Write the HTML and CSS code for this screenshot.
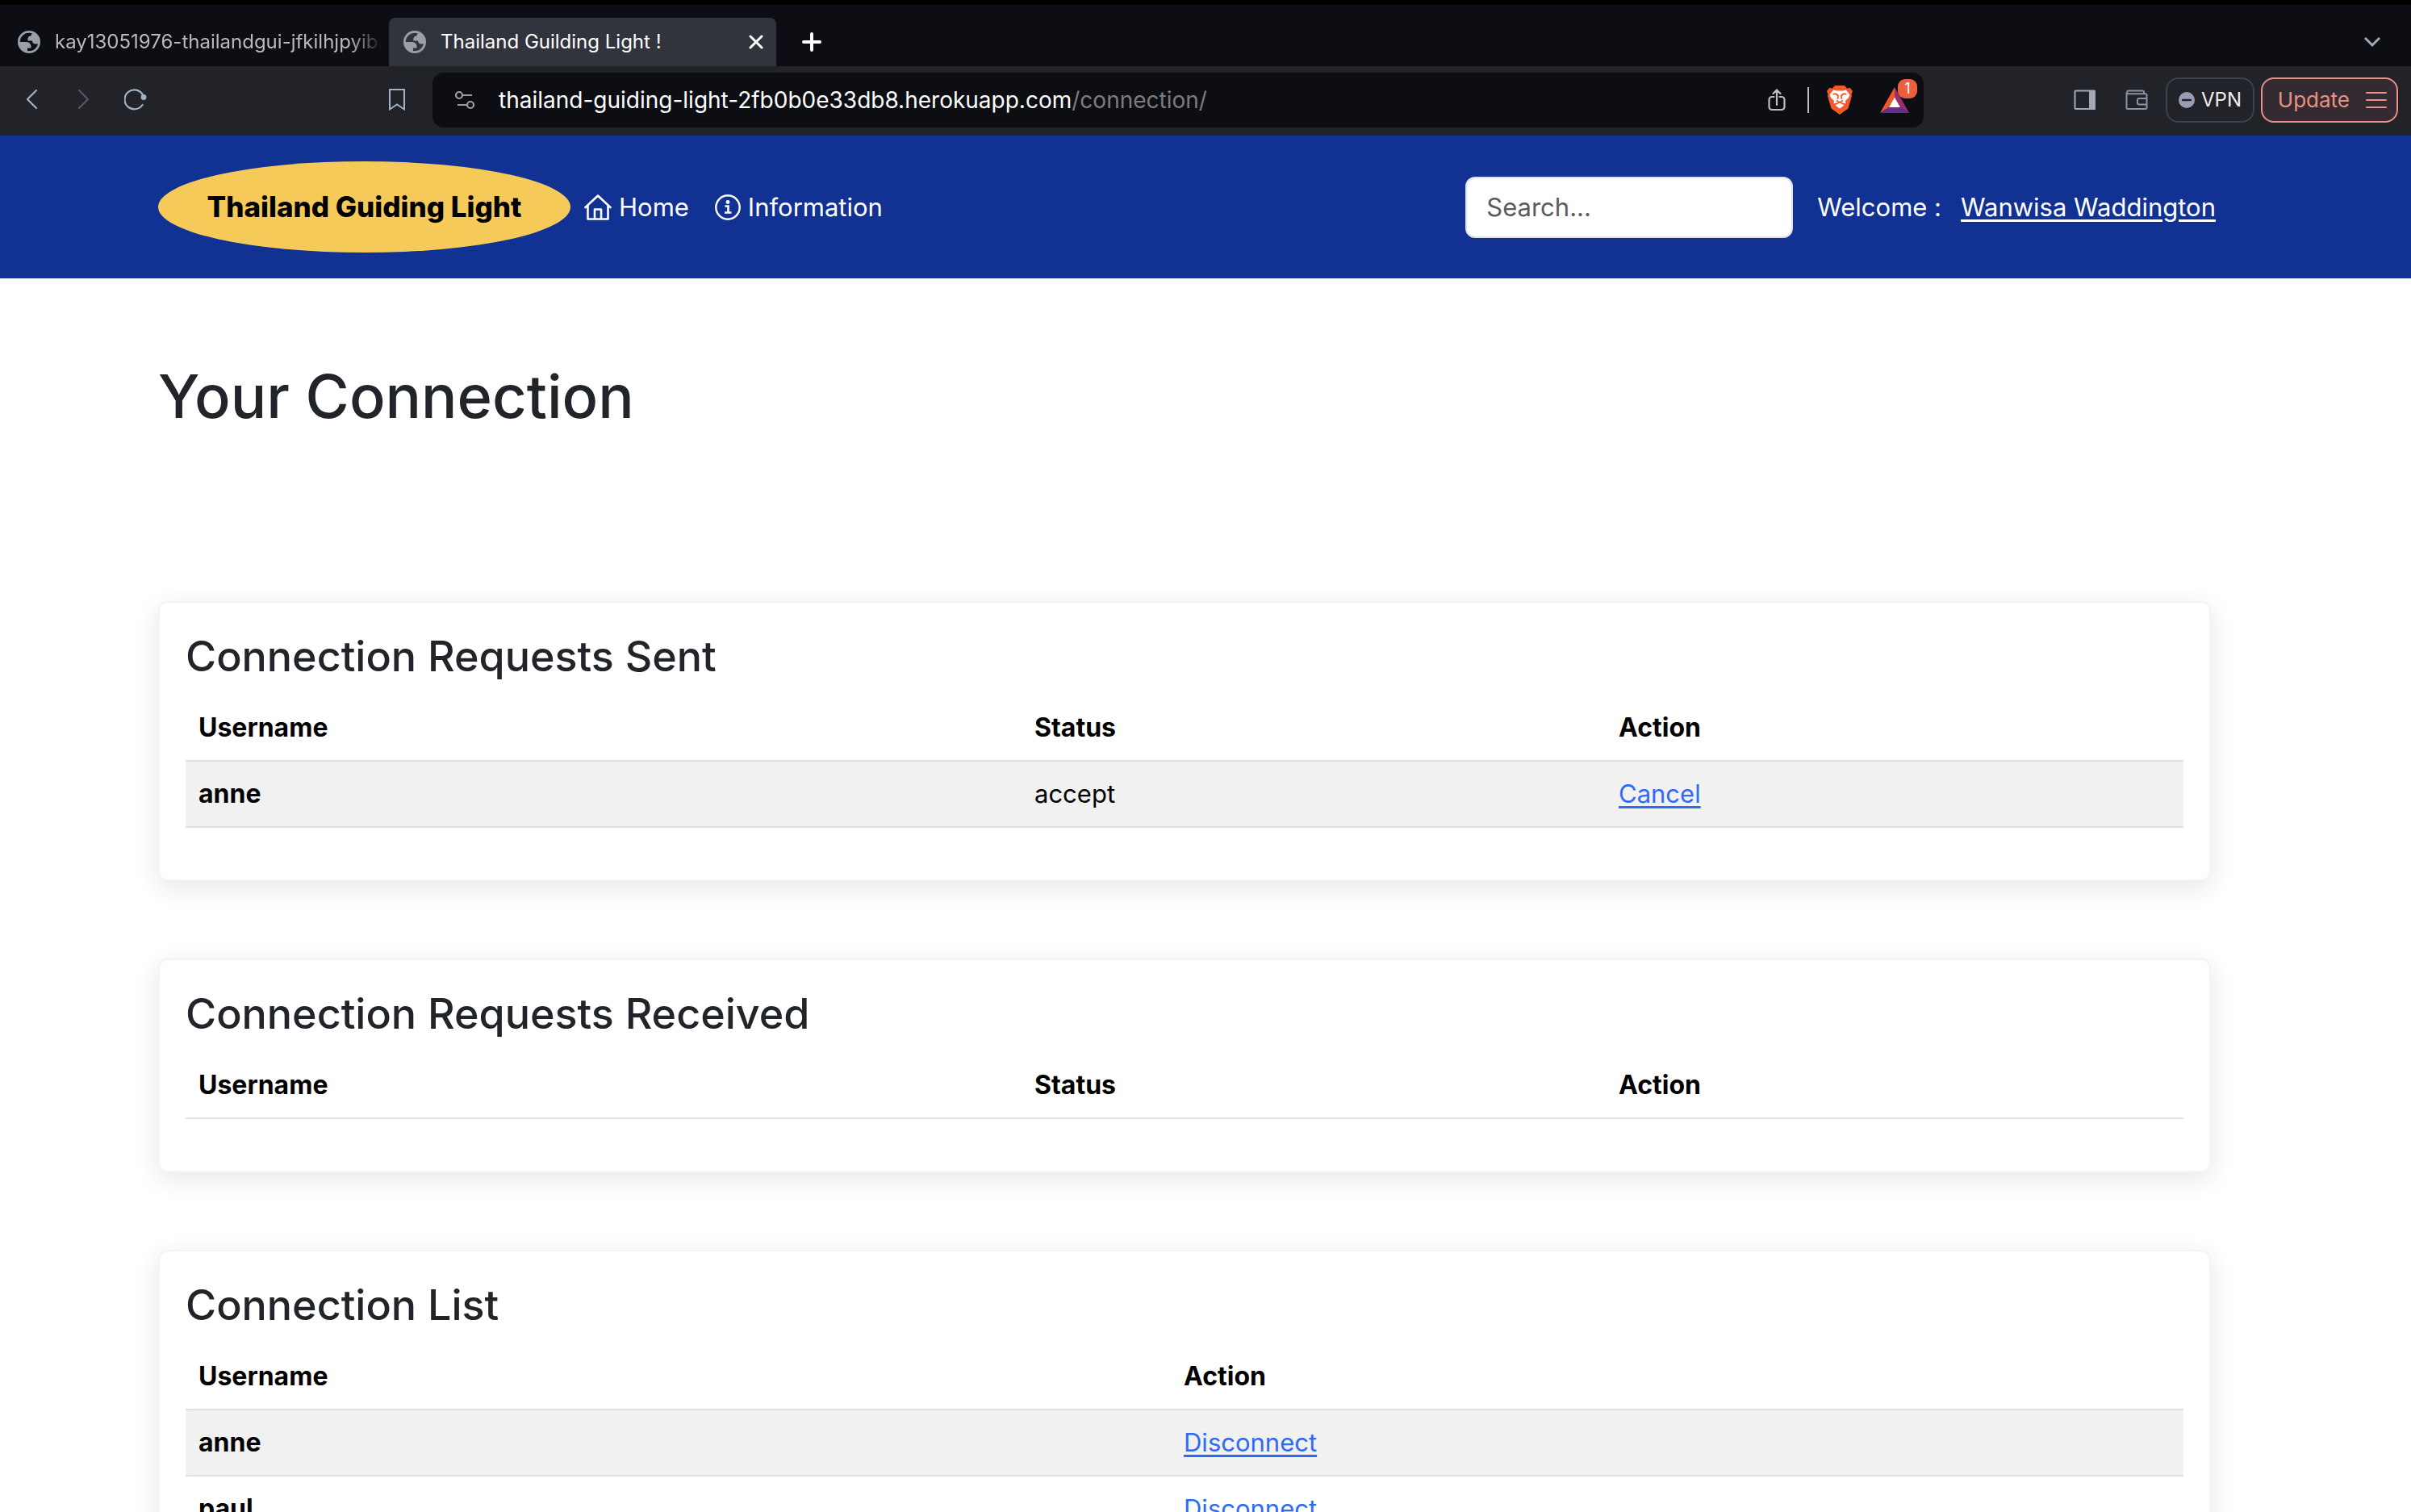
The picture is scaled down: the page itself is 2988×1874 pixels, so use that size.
FILE: index.html
```html
<!DOCTYPE html>
<html lang="en">
<head>
<meta charset="utf-8">
<title>Thailand Guilding Light !</title>
<link rel="stylesheet" href="styles.css">
</head>
<body>
<svg class="defs" aria-hidden="true">
  <symbol id="globe" viewBox="0 0 28 28"><circle cx="14" cy="14" r="12.600" fill="none" stroke="currentColor" stroke-width="2.800"/><path fill="currentColor" d="M1.500 14h8.500c4.500 0 7 2.500 6.500 7.500h-4.500V26C5 25.500 1 20 1.500 14zM16 2l5 1.500 5.500 7 .5 4.500c-1 1-2.500 1.500-4.500 1.500-3 0-4.500-1.500-4.500-4h-5.500c-.5-4 1-6 4-6 0-1.500.5-2.500 1.500-3z"/></symbol>
</svg>

<div class="tabstrip">
  <div class="tab">
    <svg class="favicon" aria-hidden="true"><use href="#globe"/></svg>
    <span class="tab-title tab-title-fade">kay13051976-thailandgui-jfkilhjpyib.</span>
  </div>
  <div class="tab tab-active">
    <svg class="favicon" aria-hidden="true"><use href="#globe"/></svg>
    <span class="tab-title">Thailand Guilding Light !</span>
    <button class="icon-btn" aria-label="Close tab"><svg width="18" height="18" viewBox="0 0 18 18" fill="none" stroke="#fff" stroke-width="3" stroke-linecap="round"><path d="M2 2l14 14M16 2L2 16"/></svg></button>
  </div>
  <button class="icon-btn new-tab" aria-label="New tab"><svg width="26" height="26" viewBox="0 0 26 26" fill="none" stroke="#fff" stroke-width="4" stroke-linecap="round"><path d="M13 3v20M3 13h20"/></svg></button>
  <button class="icon-btn tab-menu" aria-label="Search tabs"><svg width="20" height="14" viewBox="0 0 20 14" fill="none" stroke="#a1a9b8" stroke-width="3"><path d="M1 2l9 9 9-9"/></svg></button>
</div>

<div class="toolbar">
  <div class="toolbar-nav">
    <button class="icon-btn" aria-label="Back"><svg width="28" height="28" viewBox="0 0 28 28" fill="none" stroke="#a1b2c5" stroke-width="2.200" stroke-linecap="round" stroke-linejoin="round"><path d="M19 2L8 13l11 11"/></svg></button>
    <button class="icon-btn" aria-label="Forward"><svg width="28" height="28" viewBox="0 0 28 28" fill="none" stroke="#555a64" stroke-width="2.200" stroke-linecap="round" stroke-linejoin="round"><path d="M8 2l11 11L8 24"/></svg></button>
    <button class="icon-btn" aria-label="Reload"><svg width="28" height="28" viewBox="0 0 28 28" fill="none" stroke="#a1b2c5" stroke-width="2.200" stroke-linecap="round"><path d="M22.500 20A12 12 0 1 1 23 7.500"/><circle cx="24" cy="10.500" r="3.400" fill="#a1b2c5" stroke="none"/></svg></button>
  </div>
  <button class="icon-btn bookmark" aria-label="Bookmark this page"><svg width="20" height="28" viewBox="0 0 20 28" fill="none" stroke="#a1b2c5" stroke-width="2"><path d="M1 1h18v24.500l-9-6-9 6z"/></svg></button>
  <div class="address">
    <svg width="24" height="24" viewBox="0 0 24 24" fill="none" stroke="#9b9fa4" stroke-width="2.200" aria-hidden="true"><circle cx="5" cy="6" r="4"/><path d="M9 6h12M3 18h11"/><circle cx="19" cy="18" r="4"/></svg>
    <span class="url">thailand-guiding-light-2fb0b0e33db8.herokuapp.com<span class="url-path">/connection/</span></span>
    <button class="icon-btn" aria-label="Share"><svg width="22" height="28" viewBox="0 0 22 28" fill="none" stroke="#bcbec0" stroke-width="2.200" stroke-linecap="round"><path d="M7.500 10H5a3.500 3.500 0 0 0-3.500 3.500v9A3.500 3.500 0 0 0 5 26h12a3.500 3.500 0 0 0 3.500-3.500v-9A3.500 3.500 0 0 0 17 10h-2.500M11 20V2M6.500 6L11 1.500 15.500 6"/></svg></button>
    <span class="divider"></span>
    <button class="icon-btn lion" aria-label="Brave Shields"><svg width="32" height="36" viewBox="0 0 32 36"><path fill="#f0592a" d="M10 0h12l3 3.500 4-.5 3 4-1.500 4 .5 2-4.500 15.500L16 36 5.500 28.500 1 13l.5-2L0 7l3-4 4 .5z"/><path fill="#fff" d="M8 5.500l4.500 1h7l4.500-1 4.500 6-1.500 3.500-4 4 .5 3.500L18 21l-2-1-2 1-5.500 1.500.5-3.500-4-4-1.500-3.500zM10.500 24.500L16 21.500l5.500 3L16 28.500z"/><path fill="none" stroke="#f0592a" stroke-width="1.800" d="M7.500 10.500l4 0 2.500 2-.5 4.500M24.500 10.500l-4 0-2.500 2 .5 4.500M12 18.500l4 2.500 4-2.500"/></svg></button>
    <button class="icon-btn rewards" aria-label="Brave Rewards"><svg width="36" height="32" viewBox="0 0 36 32"><path fill="#f0562f" d="M18 0v13l-7 12L0 32z"/><path fill="#9e2d6b" d="M18 0l18 32-11-7-7-12z"/><path fill="#662d91" d="M0 32l11-7h14l11 7z"/><path fill="#fff" d="M18 12.500l7 12.500H11z"/></svg><span class="badge">1</span></button>
  </div>
  <div class="toolbar-end">
    <button class="icon-btn" aria-label="Sidebar"><svg width="28" height="26" viewBox="0 0 28 26"><rect x="1.500" y="1.500" width="24.500" height="22.500" rx="1" fill="none" stroke="#a1a9b8" stroke-width="2"/><path fill="#a1a9b8" d="M19 1h8v24h-8z"/></svg></button>
    <button class="icon-btn" aria-label="Wallet"><svg width="28" height="26" viewBox="0 0 28 26" fill="none" stroke="#8b93a1" stroke-width="2"><path d="M23 5V3a1.500 1.500 0 0 0-1.500-1.500H3.500a2 2 0 0 0 0 3.800H25a1.500 1.500 0 0 1 1.500 1.500v15.700A1.500 1.500 0 0 1 25 24H3a1.500 1.500 0 0 1-1.500-1.500v-19M26.500 11H17a2 2 0 0 0-2 2v3.500a2 2 0 0 0 2 2h9.500"/></svg></button>
    <div class="pills">
      <button class="pill"><svg width="20" height="20" viewBox="0 0 20 20" aria-hidden="true"><circle cx="10" cy="10" r="10" fill="#9a9db3"/><path stroke="#222328" stroke-width="2.400" stroke-linecap="round" d="M5 10h10"/></svg>VPN</button>
      <button class="pill pill-update">Update<svg width="26" height="22" viewBox="0 0 26 22" fill="none" stroke="#ea9183" stroke-width="2" stroke-linecap="round" aria-hidden="true"><path d="M1 2h24M1 11h24M1 20h24"/></svg></button>
    </div>
  </div>
</div>

<div class="page">
  <header class="navbar">
    <a class="brand" href="#">Thailand Guiding Light</a>
    <nav class="nav">
      <a class="nav-link" href="#"><svg width="34" height="32" viewBox="0 0 34 32" fill="none" stroke="currentColor" stroke-width="2.600" stroke-linecap="round" stroke-linejoin="round" aria-hidden="true"><path d="M1.500 16L17 1.500 32.500 16M4.500 14v16.500h25V14M13 30.500V18.500h8v12"/></svg>Home</a>
      <a class="nav-link" href="#"><svg width="32" height="32" viewBox="0 0 32 32" fill="none" stroke="currentColor" aria-hidden="true"><circle cx="16" cy="16" r="14.700" stroke-width="2.400"/><circle cx="16" cy="9.500" r="2.400" fill="currentColor" stroke="none"/><path stroke-width="2.600" d="M12.500 14.500h4v8M12 22.500h8.500"/></svg>Information</a>
    </nav>
    <input class="search" type="search" placeholder="Search..." aria-label="Search">
    <span class="welcome">Welcome :</span>
    <a class="user" href="#">Wanwisa Waddington</a>
  </header>

  <main class="content">
    <h1>Your Connection</h1>

    <section class="card">
      <h2>Connection Requests Sent</h2>
      <table class="table">
        <thead><tr><th class="col-user">Username</th><th class="col-status">Status</th><th>Action</th></tr></thead>
        <tbody><tr><th scope="row">anne</th><td>accept</td><td><a href="#">Cancel</a></td></tr></tbody>
      </table>
    </section>

    <section class="card">
      <h2>Connection Requests Received</h2>
      <table class="table">
        <thead><tr><th class="col-user">Username</th><th class="col-status">Status</th><th>Action</th></tr></thead>
      </table>
    </section>

    <section class="card">
      <h2>Connection List</h2>
      <table class="table">
        <thead><tr><th class="col-half">Username</th><th>Action</th></tr></thead>
        <tbody>
          <tr><th scope="row">anne</th><td><a href="#">Disconnect</a></td></tr>
          <tr><th scope="row">paul</th><td><a href="#">Disconnect</a></td></tr>
        </tbody>
      </table>
    </section>
  </main>
</div>
</body>
</html>
```

FILE: styles.css
```css
*, *::before, *::after { box-sizing: border-box; }

body {
  margin: 0;
  height: 100vh;
  display: flex;
  flex-direction: column;
  overflow: hidden;
  background: #fff;
  color: #212529;
  font-family: Inter, "Liberation Sans", sans-serif;
  font-size: 31px;
  line-height: 48px;
}

svg { display: block; flex: none; }
.defs { position: absolute; width: 0; height: 0; }

button { font: inherit; color: inherit; }
.icon-btn { display: flex; padding: 0; border: 0; background: none; }

/* Tab strip */
.tabstrip {
  flex: none;
  display: flex;
  height: 82px;
  padding-top: 16px;
  border-top: 6px solid #000;
  background: #0d0e13;
  font-size: 24px;
}
.tab {
  display: flex;
  align-items: center;
  gap: 18px;
  width: 480px;
  padding: 0 16px 0 18px;
  border-radius: 8px 8px 0 0;
  color: #b9babc;
}
.tab:first-child { width: 482px; padding: 0 8px 0 22px; }
.tab-active { background: #32343d; color: #fff; }
.favicon { width: 28px; height: 28px; color: #9aa0a6; }
.tab-title { flex: 1; overflow: hidden; white-space: nowrap; }
.tab-title-fade {
  -webkit-mask-image: linear-gradient(to right, #000 90%, transparent);
  mask-image: linear-gradient(to right, #000 90%, transparent);
}
.new-tab { align-self: center; margin-left: 31px; }
.tab-menu { align-self: center; margin: 0 38px 0 auto; }

/* Toolbar */
.toolbar {
  flex: none;
  display: flex;
  align-items: center;
  height: 86px;
  padding: 0 16px 2px 26px;
  background: #222328;
}
.toolbar-nav { display: flex; gap: 36px; }
.bookmark { margin-left: 300px; }
.address {
  display: flex;
  align-items: center;
  flex: 1;
  height: 68px;
  margin-left: 34px;
  padding: 0 18px 0 28px;
  border-radius: 14px;
  background: #0d0e13;
  font-size: 28px;
}
.url { flex: 1; margin-left: 30px; color: #fff; white-space: nowrap; }
.url-path { color: #7b7c80; }
.divider { width: 2px; height: 32px; margin: 0 22px 0 27px; background: #bcbec0; }
.rewards { position: relative; margin-left: 34px; }
.badge {
  position: absolute;
  top: -10px;
  right: -10px;
  width: 24px;
  height: 24px;
  border-radius: 9px;
  background: #eb5f3d;
  color: #fff;
  font-size: 18px;
  line-height: 24px;
  text-align: center;
}
.toolbar-end { display: flex; align-items: center; gap: 36px; margin-left: 186px; }
.pills { display: flex; gap: 8px; margin-left: -14px; }
.pill {
  display: flex;
  align-items: center;
  justify-content: center;
  gap: 8px;
  width: 110px;
  height: 56px;
  padding: 0;
  border: 2px solid #3b424c;
  border-radius: 16px;
  background: none;
  color: #ededf0;
  font-size: 24px;
}
.pill-update {
  justify-content: flex-end;
  gap: 20px;
  width: 170px;
  padding-right: 12px;
  border-color: #ea9183;
  background: #332b31;
  color: #ea9183;
  font-size: 26px;
}

/* Site */
.page { flex: 1; overflow: hidden; }
.navbar {
  display: flex;
  align-items: center;
  height: 177px;
  padding: 0 242px 0 196px;
  background: #113293;
  color: #fff;
}
.brand {
  width: 511px;
  border-radius: 50%;
  background: #f5ca58;
  color: #000;
  font-size: 35px;
  font-weight: 800;
  line-height: 113px;
  text-align: center;
  text-decoration: none;
}
.nav { display: flex; gap: 32px; margin-left: 17px; }
.nav-link {
  display: flex;
  align-items: center;
  gap: 9px;
  color: #fff;
  text-decoration: none;
}
.search {
  width: 406px;
  height: 76px;
  margin-left: auto;
  padding: 0 24px;
  border: 2px solid #dee2e6;
  border-radius: 12px;
  background: #fff;
  font: inherit;
}
.search::placeholder { color: #595c5f; opacity: 1; }
.welcome { margin: 0 24px 0 30px; }
.user { color: #fff; text-underline-offset: 4px; }

.content { padding: 96px 248px 0 196px; }
h1 { margin: 0 0 204px; font-size: 74px; font-weight: 500; line-height: 100px; }
.card {
  margin-bottom: 96px;
  padding: 32px;
  border: 2px solid #f4f4f4;
  border-radius: 12px;
  background: #fff;
  box-shadow: 0 8px 32px rgba(0, 0, 0, .1);
}
h2 { margin: 0 0 14px; font-size: 52px; font-weight: 500; line-height: 69px; }
.table {
  width: 100%;
  margin-bottom: 32px;
  border-spacing: 0;
  table-layout: fixed;
  color: #000;
}
.table th, .table td {
  padding: 16px;
  border-bottom: 2px solid #dee2e6;
  text-align: left;
}
.table th { font-size: 32px; font-weight: 650; }
.table tbody tr:nth-child(odd) { background: #f1f1f1; }
.table a { color: #2d6bf6; text-underline-offset: 4px; }
.col-user { width: 1036px; }
.col-status { width: 724px; }
.col-half { width: 1221px; }
```
